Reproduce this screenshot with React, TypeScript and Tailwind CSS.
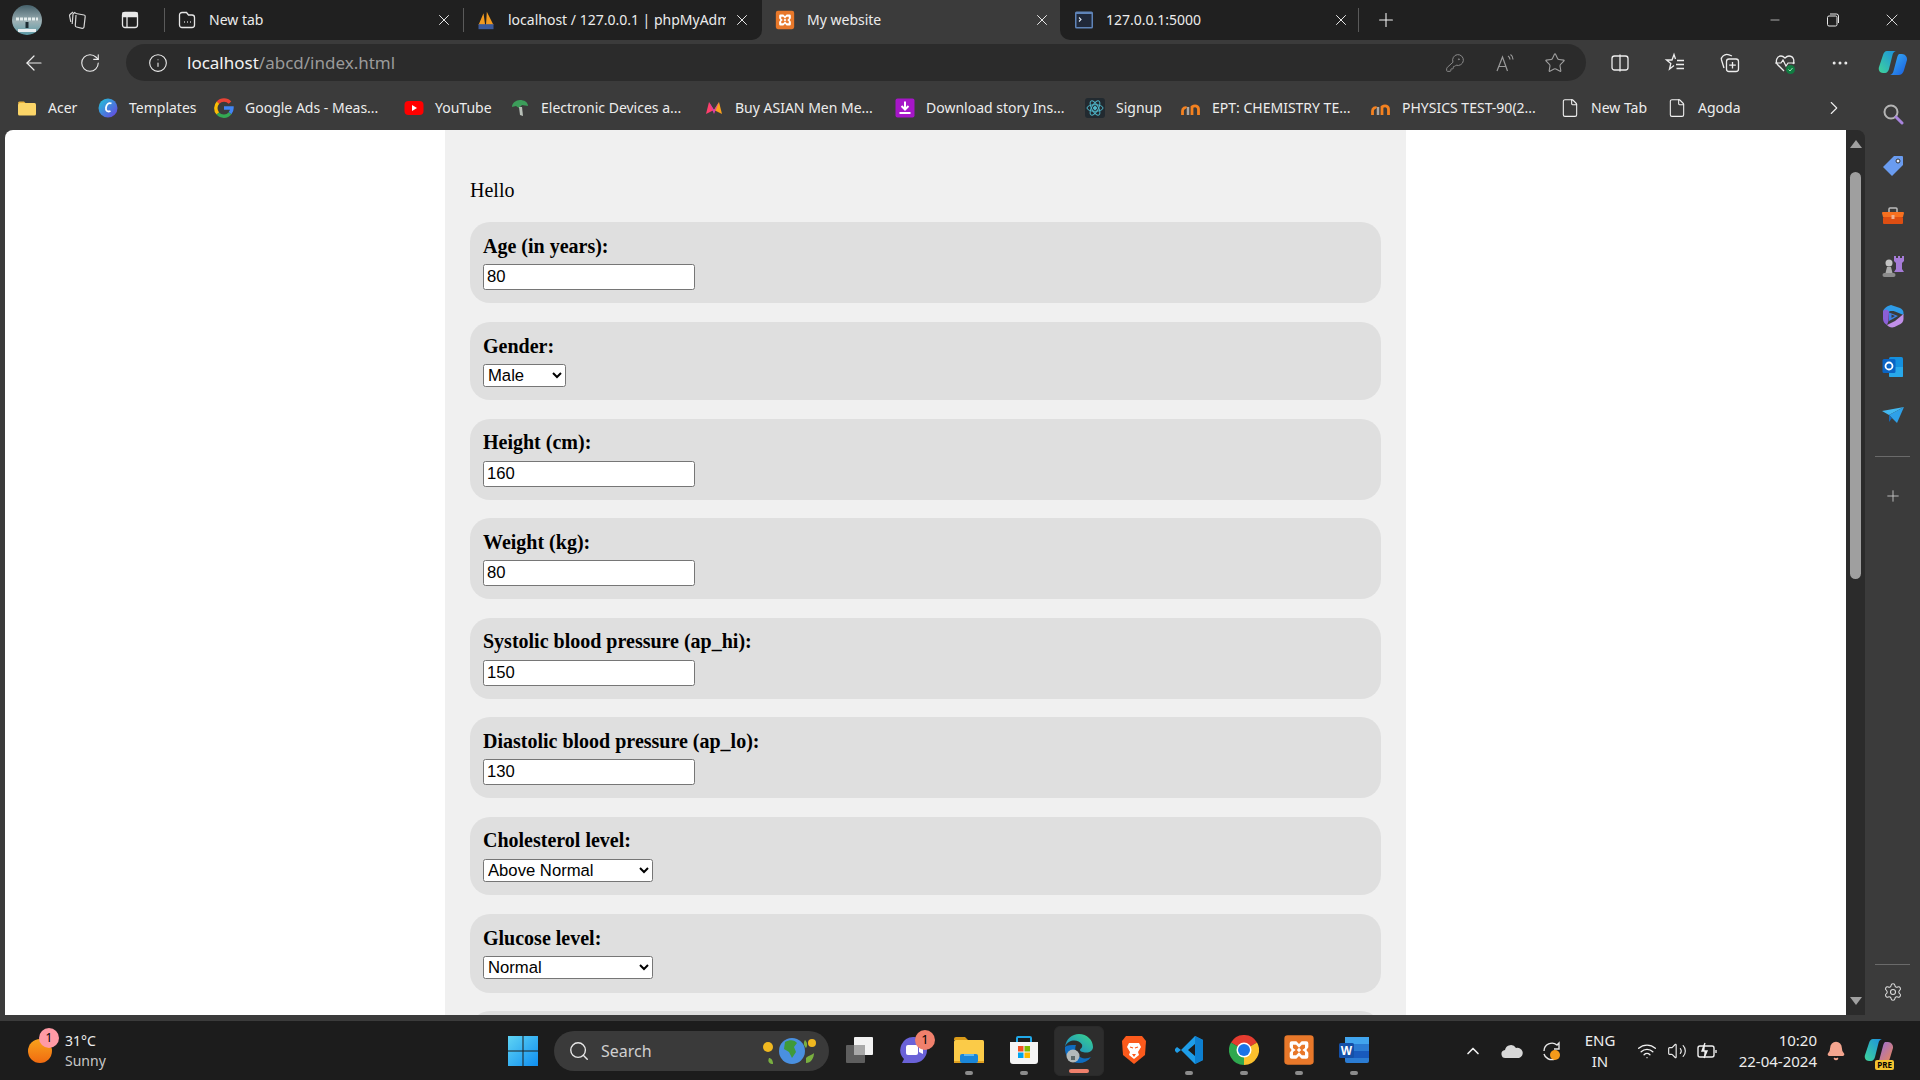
import type { ReactNode } from "react";
import {
  ArrowLeft,
  Bell,
  ChevronRight,
  ChevronUp,
  File,
  Info,
  KeyRound,
  Minus,
  MoreHorizontal,
  Plus,
  RotateCw,
  Search,
  Settings,
  Star,
  Volume2,
  Wifi,
  X,
} from "lucide-react";

function Xampp({ size = 20 }: { size?: number }) {
  return (
    <svg width={size} height={size} viewBox="0 0 24 24">
      <rect x="1" y="1" width="22" height="22" rx="2.500" fill="#e8782a" />
      <path
        d="M6.500 5.500H10l2 2 2-2h3.500A1.500 1.500 0 0 1 19 7v3l-1.500 2 1.500 2v3a1.500 1.500 0 0 1-1.500 1.500H14l-2-2-2 2H6.500A1.500 1.500 0 0 1 5 17v-3l1.500-2L5 10V7a1.500 1.500 0 0 1 1.500-1.500z"
        fill="#fff"
      />
      <path d="M7.500 8h2.300l2.200 2.300L14.200 8h2.300v2.500L14.500 12l2 1.500V16h-2.300L12 13.700 9.800 16H7.500v-2.500l2-1.500-2-1.500z" fill="#e8782a" />
      <path d="M10.300 12 12 10.300 13.700 12 12 13.700z" fill="#fff" />
    </svg>
  );
}

function Pma() {
  return (
    <svg width="22" height="22" viewBox="0 0 24 24">
      <path d="M3 18 9 4l2 14zM12 18l1-16 8 16z" fill="#f29a1f" />
      <rect x="3" y="17" width="18" height="6" fill="#3c5a9a" />
    </svg>
  );
}

function TabPageIcon() {
  return (
    <svg width="20" height="20" viewBox="0 0 20 20" fill="none" stroke="#e6e6e6" strokeWidth="1.300">
      <path d="M5 2.500h4.500L11.500 5H15a2.500 2.500 0 0 1 2.500 2.500V15a2.500 2.500 0 0 1-2.500 2.500H5A2.500 2.500 0 0 1 2.500 15V5A2.500 2.500 0 0 1 5 2.500z" />
      <path d="M7 12h.8M10 12h.8M13 12h.8" strokeWidth="1.600" />
    </svg>
  );
}

function TerminalIcon() {
  return (
    <svg width="20" height="20" viewBox="0 0 20 20">
      <rect x="1" y="1.500" width="18" height="17" rx="1.500" fill="#5f84b8" />
      <rect x="2.500" y="4" width="15" height="13" fill="#20293a" />
      <path d="M5 7.500 7 9.500 5 11.500" stroke="#dfe7f2" fill="none" strokeWidth="1.100" />
    </svg>
  );
}

function Avatar() {
  return (
    <svg width="30" height="30" viewBox="0 0 30 30">
      <defs>
        <linearGradient id="av" x1="0" y1="0" x2="0" y2="1">
          <stop offset="0" stopColor="#45606a" />
          <stop offset="0.55" stopColor="#9db1b5" />
          <stop offset="1" stopColor="#5c9aa6" />
        </linearGradient>
      </defs>
      <circle cx="15" cy="15" r="15" fill="url(#av)" />
      <path d="M4 14h22" stroke="#e5eeee" strokeWidth="3" strokeDasharray="3 1" />
      <path d="M13.500 17h3v6h-3z" fill="#1d2c33" />
      <path d="M6 24h18v3H6z" fill="#e8eef0" />
    </svg>
  );
}

function Workspaces() {
  return (
    <svg width="22" height="22" viewBox="0 0 22 22" fill="none" stroke="#d6d6d6" strokeWidth="1.200">
      <path d="M10 4.500 18 6a1.500 1.500 0 0 1 1.200 1.700L18 18a1.500 1.500 0 0 1-1.800 1.300L10.500 18a1.500 1.500 0 0 1-1.200-1.700L10 6" />
      <path d="M10 4.500 8.600 3.500 7 5 6.200 15" />
      <path d="M7 3 4 5.500a1.500 1.500 0 0 0-.4 1.500l1.200 6" />
    </svg>
  );
}

function VerticalTabs() {
  return (
    <svg width="20" height="20" viewBox="0 0 20 20" fill="none" stroke="#e8e8e8" strokeWidth="1.300">
      <rect x="2.500" y="2.500" width="15" height="15" rx="2.500" />
      <path d="M3 3h14v3.500H3z" fill="#e8e8e8" />
      <path d="M7 6v11" />
    </svg>
  );
}

function Restore() {
  return (
    <svg width="14" height="14" viewBox="0 0 14 14" fill="none" stroke="#e8e8e8" strokeWidth="1">
      <rect x="1.500" y="3" width="9.500" height="10" rx="1.500" />
      <path d="M4 1h6.500A2 2 0 0 1 12.500 3v7" />
    </svg>
  );
}

function ReadAloud() {
  return (
    <svg width="22" height="22" viewBox="0 0 22 22" fill="none" stroke="#9a9a9a" strokeWidth="1.200">
      <path d="M3 19 8.500 5l5 14M5 14.500h7" />
      <path d="M14 4c1.500.8 2 2 2 3.500M16.500 2.500c1.800 1.200 2.500 3 2.500 5" />
    </svg>
  );
}

function SplitIcon() {
  return (
    <svg width="20" height="20" viewBox="0 0 20 20" fill="none" stroke="#ededed" strokeWidth="1.300">
      <rect x="2" y="3" width="16" height="14" rx="2.500" />
      <path d="M10 1.500v17" />
    </svg>
  );
}

function Favs() {
  return (
    <svg width="22" height="22" viewBox="0 0 22 22" fill="none" stroke="#ededed" strokeWidth="1.300">
      <path d="M10 13.500 5.500 17l1.300-5.500L2.500 8h5.500L10 2.500 11.500 7" />
      <path d="M13 8.500h7M12 12.500h8M12.500 16.500h7.500" />
    </svg>
  );
}

function Collections() {
  return (
    <svg width="22" height="22" viewBox="0 0 22 22" fill="none" stroke="#ededed" strokeWidth="1.300">
      <path d="M5 16 2.500 8c-.4-1.500 .2-3 1.500-4l2-1.200c1-.5 2.500-.5 4 0L13 4" />
      <rect x="7.500" y="7" width="12" height="12.500" rx="2.500" />
      <path d="M13.500 10v6.500M10.200 13.200h6.600" />
    </svg>
  );
}

function Health() {
  return (
    <svg width="24" height="24" viewBox="0 0 24 24" fill="none">
      <path d="M11 20 4.500 13.500C2 10 4 5 8 5c2 0 3 1 4 2 1-1 2-2 4-2 4 0 6 4 4 8" stroke="#ededed" strokeWidth="1.300" />
      <path d="M2 12h6l2-3 3 6 2-3h7" stroke="#ededed" strokeWidth="1.200" />
      <circle cx="17.500" cy="18.500" r="4.500" fill="#107c41" />
      <path d="M15.500 18.500l1.500 1.500 2.500-3" stroke="#9fe0b8" strokeWidth="1" />
    </svg>
  );
}

function CopilotLogo({ tray }: { tray?: boolean }) {
  return (
    <svg width="30" height="26" viewBox="0 0 30 26">
      <defs>
        <linearGradient id="cpa" x1="0" y1="1" x2="1" y2="0">
          <stop offset="0" stopColor="#3fd49a" />
          <stop offset="1" stopColor="#1b8fe0" />
        </linearGradient>
        <linearGradient id="cpb" x1="0" y1="0" x2="1" y2="1">
          <stop offset="0" stopColor="#38b4f4" />
          <stop offset="1" stopColor="#1a5ce0" />
        </linearGradient>
        <linearGradient id="cpc" x1="0" y1="0" x2="1" y2="1">
          <stop offset="0" stopColor="#8f6be8" />
          <stop offset="1" stopColor="#f0884c" />
        </linearGradient>
      </defs>
      <path d="M9 1h9c-2 .5-3 2-3.500 4L11 19c-.5 2-2 4-4 4H5c-3 0-5-3-4-6L5 5c.6-2 2-4 4-4z" fill="url(#cpa)" />
      <path d="M21 4h3c3 0 5.500 3 5 6l-3 10c-.6 2-2 5-5 5h-9c2-.5 3-2 3.500-4L19 8c.3-1.500 1-3 2-4z" fill={tray ? "url(#cpc)" : "url(#cpb)"} />
    </svg>
  );
}

function Favicon({ kind }: { kind: string }) {
  if (kind === "folder")
    return (
      <svg width="20" height="20" viewBox="0 0 20 20">
        <path d="M1 5a1.500 1.500 0 0 1 1.500-1.500H7L9 5.500H1z" fill="#e8b13b" />
        <rect x="1" y="5" width="18" height="12.500" rx="1.500" fill="#fbd568" />
      </svg>
    );
  if (kind === "c")
    return (
      <svg width="20" height="20" viewBox="0 0 20 20">
        <defs>
          <linearGradient id="cg" x1="0" y1="0" x2="1" y2="1">
            <stop offset="0" stopColor="#1fc7d8" />
            <stop offset="1" stopColor="#6a3fe0" />
          </linearGradient>
        </defs>
        <circle cx="10" cy="10" r="9.500" fill="url(#cg)" />
        <path d="M13.500 5.500c-3-1.500-5 1-5.500 4-.4 3 1 5 4.500 3.500" fill="none" stroke="#fff" strokeWidth="1.800" />
      </svg>
    );
  if (kind === "google")
    return (
      <svg width="20" height="20" viewBox="0 0 20 20" fill="none" strokeWidth="3.400">
        <path d="M16 4.700A8 8 0 0 0 4 4.700" stroke="#ea4335" />
        <path d="M4 4.700a8 8 0 0 0-.2 10.800" stroke="#fbbc05" />
        <path d="M3.800 15.500a8 8 0 0 0 12.300-.3" stroke="#34a853" />
        <path d="M16.100 15.200A8 8 0 0 0 18 10h-8" stroke="#4285f4" />
      </svg>
    );
  if (kind === "yt")
    return (
      <svg width="20" height="20" viewBox="0 0 20 20">
        <rect x="0.500" y="3" width="19" height="14" rx="4" fill="#f00" />
        <path d="M8 7v6l5-3z" fill="#fff" />
      </svg>
    );
  if (kind === "leaf")
    return (
      <svg width="20" height="20" viewBox="0 0 20 20">
        <path d="M2 9c0-4 4-7 8-7s8 2 8 6l-6-1-3 3-3-2z" fill="#3c9d5a" />
        <path d="M9 9h3l1 9-3-1z" fill="#b8c0b8" />
      </svg>
    );
  if (kind === "myntra")
    return (
      <svg width="20" height="20" viewBox="0 0 20 20">
        <path d="M2 16 5 4l5 8z" fill="#ff3f6c" />
        <path d="M18 16 15 4l-5 8z" fill="#f9a01b" />
        <path d="M5 4 10 12l5-8-5 12z" fill="#d93fa8" />
      </svg>
    );
  if (kind === "dl")
    return (
      <svg width="20" height="20" viewBox="0 0 20 20">
        <rect x="0.500" y="0.500" width="19" height="19" rx="2" fill="#a616c8" />
        <path d="M10 3.500v8M6.500 8l3.500 3.500L13.500 8M4.500 15h11" stroke="#fff" strokeWidth="2" fill="none" />
      </svg>
    );
  if (kind === "react")
    return (
      <svg width="20" height="20" viewBox="0 0 20 20" fill="none" stroke="#4fb6c9" strokeWidth="1">
        <rect width="20" height="20" rx="3" fill="#222a30" stroke="none" />
        <ellipse cx="10" cy="10" rx="8" ry="3.300" />
        <ellipse cx="10" cy="10" rx="8" ry="3.300" transform="rotate(60 10 10)" />
        <ellipse cx="10" cy="10" rx="8" ry="3.300" transform="rotate(120 10 10)" />
        <circle cx="10" cy="10" r="1.500" fill="#4fb6c9" />
      </svg>
    );
  if (kind === "ept")
    return (
      <svg width="20" height="20" viewBox="0 0 20 20" fill="none">
        <path d="M7 17V9" stroke="#a8a8a8" strokeWidth="2.500" />
        <path d="M1.500 17v-4c0-3 3-4 4-3M11 17V9c3-2 6.500-1 6.500 2.500V17" stroke="#f58220" strokeWidth="2.800" />
      </svg>
    );
  return <File size={20} strokeWidth={1.3} color="#f0f0f0" />;
}

const bookmarks = [
  { label: "Acer", icon: "folder", cls: "w-[81px]" },
  { label: "Templates", icon: "c", cls: "w-[116px]" },
  { label: "Google Ads - Meas...", icon: "google", cls: "w-[190px]" },
  { label: "YouTube", icon: "yt", cls: "w-[106px]" },
  { label: "Electronic Devices a...", icon: "leaf", cls: "w-[194px]" },
  { label: "Buy ASIAN Men Me...", icon: "myntra", cls: "w-[191px]" },
  { label: "Download story Ins...", icon: "dl", cls: "w-[190px]" },
  { label: "Signup", icon: "react", cls: "w-[96px]" },
  { label: "EPT: CHEMISTRY TE...", icon: "ept", cls: "w-[190px]" },
  { label: "PHYSICS TEST-90(2...", icon: "ept", cls: "w-[189px]" },
  { label: "New Tab", icon: "file", cls: "w-[107px]" },
  { label: "Agoda", icon: "file", cls: "w-[100px]" },
];

function TabItem({ icon, title, cls }: { icon: ReactNode; title: string; cls: string }) {
  return (
    <div className={`${cls} flex h-10 shrink-0 items-center`}>
      <span className="flex w-[20px] shrink-0 justify-center">{icon}</span>
      <span className="mt-[-2px] ml-[12px] w-[218px] overflow-hidden whitespace-nowrap text-[14px] text-[#ececec]">{title}</span>
      <X size={18} strokeWidth={1.3} color="#ededed" className="ml-auto" />
    </div>
  );
}

function TabStrip() {
  return (
    <div className="flex h-10 shrink-0 bg-[#3b3b3b]">
      <div className="flex w-[762px] rounded-br-[10px] bg-[#202020]">
        <div className="flex w-[165px] shrink-0 items-center">
          <span className="ml-[12px]"><Avatar /></span>
          <span className="ml-[24px]"><Workspaces /></span>
          <span className="ml-[32px]"><VerticalTabs /></span>
          <span className="ml-[24px] h-[24px] w-px bg-[#5a5a5a]" />
        </div>
        <TabItem icon={<TabPageIcon />} title="New tab" cls="w-[298px] pl-[12px] pr-[10px]" />
        <div className="my-[8px] w-px bg-[#5a5a5a]" />
        <TabItem icon={<Pma />} title="localhost / 127.0.0.1 | phpMyAdmin" cls="w-[297px] pl-[12px] pr-[10px]" />
      </div>
      <TabItem icon={<Xampp />} title="My website" cls="w-[298px] pl-[13px] pr-[9px]" />
      <div className="flex flex-1 items-center rounded-bl-[10px] bg-[#202020]">
        <TabItem icon={<TerminalIcon />} title="127.0.0.1:5000" cls="ml-[2px] w-[296px] pl-[12px] pr-[8px]" />
        <div className="h-[24px] w-px bg-[#5a5a5a]" />
        <Plus size={22} strokeWidth={1.2} color="#efefef" className="ml-[16px]" />
        <div className="ml-auto flex items-center">
          <Minus size={14} strokeWidth={1.2} color="#e8e8e8" className="mr-[44px]" />
          <Restore />
          <X size={20} strokeWidth={1.1} color="#e8e8e8" className="ml-[42px] mr-[18px]" />
        </div>
      </div>
    </div>
  );
}

function Toolbar() {
  return (
    <div className="flex h-[45px] shrink-0 items-center bg-[#3b3b3b]">
      <ArrowLeft size={24} strokeWidth={1.2} color="#ededed" className="ml-[22px]" />
      <RotateCw size={22} strokeWidth={1.2} color="#ededed" className="ml-[33px]" />
      <div className="ml-[25px] flex h-[37px] w-[1460px] items-center rounded-full bg-[#2b2b2b]">
        <Info size={20} strokeWidth={1.3} color="#ededed" className="ml-[22px]" />
        <span className="ml-[19px] text-[17px] text-[#f2f2f2]">
          localhost<span className="text-[#9a9a9a]">/abcd/index.html</span>
        </span>
        <KeyRound size={20} strokeWidth={1.2} color="#8a8a8a" className="ml-auto" />
        <span className="ml-[29px]"><ReadAloud /></span>
        <Star size={22} strokeWidth={1.2} color="#a0a0a0" className="ml-[28px] mr-[20px]" />
      </div>
      <span className="ml-[24px]"><SplitIcon /></span>
      <span className="ml-[34px]"><Favs /></span>
      <span className="ml-[33px]"><Collections /></span>
      <span className="ml-[32px]"><Health /></span>
      <MoreHorizontal size={20} strokeWidth={1.6} color="#ededed" className="ml-[33px]" />
      <span className="ml-[28px] flex"><CopilotLogo /></span>
    </div>
  );
}

function BookmarkBar() {
  return (
    <div className="flex h-[45px] shrink-0 items-center bg-[#3b3b3b] pl-[17px]">
      {bookmarks.map((b) => (
        <div key={b.label} className={`${b.cls} flex shrink-0 items-center`}>
          <Favicon kind={b.icon} />
          <span className="ml-[11px] whitespace-nowrap text-[14px] text-[#ededed]">{b.label}</span>
        </div>
      ))}
      <ChevronRight size={22} strokeWidth={1.2} color="#ededed" className="ml-[56px]" />
    </div>
  );
}

function Card({ label, children, cls }: { label: string; children: ReactNode; cls: string }) {
  return (
    <div className={`${cls} mb-[18.75px] rounded-[20px] bg-[#dfdfdf] px-[13px] py-[12.5px]`}>
      <label className="mb-[6.25px] block text-[20px] leading-[23px] font-bold">{label}</label>
      {children}
    </div>
  );
}

function NumberField({ value }: { value: string }) {
  return (
    <input
      type="text"
      defaultValue={value}
      className="block h-[26px] w-[212px] rounded-[2.500px] border border-[#767676] bg-white px-[3px] font-['Liberation_Sans',Arial,sans-serif] text-[16.67px] text-black"
    />
  );
}

function SelectField({ value, cls }: { value: string; cls: string }) {
  return (
    <select
      defaultValue={value}
      className={`${cls} block h-[23px] rounded-[2.500px] border border-[#767676] bg-white font-['Liberation_Sans',Arial,sans-serif] text-[16.67px] text-black`}
    >
      <option>{value}</option>
    </select>
  );
}

function PageContent() {
  return (
    <div className="min-w-0 flex-1 overflow-hidden rounded-tl-[8px] bg-white">
      <div className="ml-[440px] h-full w-[961px] overflow-hidden bg-[#f0f0f0] px-[25px] pt-[49px] font-['Liberation_Serif','Times_New_Roman',serif] text-black">
        <p className="mb-[20px] text-[20px] leading-[23px]">Hello</p>
        <Card label="Age (in years):" cls="h-[81.25px]"><NumberField value="80" /></Card>
        <Card label="Gender:" cls="h-[78px]"><SelectField value="Male" cls="w-[83px]" /></Card>
        <Card label="Height (cm):" cls="h-[80.75px]"><NumberField value="160" /></Card>
        <Card label="Weight (kg):" cls="h-[80.75px]"><NumberField value="80" /></Card>
        <Card label="Systolic blood pressure (ap_hi):" cls="h-[80.75px]"><NumberField value="150" /></Card>
        <Card label="Diastolic blood pressure (ap_lo):" cls="h-[80.75px]"><NumberField value="130" /></Card>
        <Card label="Cholesterol level:" cls="h-[78.5px]"><SelectField value="Above Normal" cls="w-[170px]" /></Card>
        <Card label="Glucose level:" cls="h-[78.5px]"><SelectField value="Normal" cls="w-[170px]" /></Card>
        <Card label="Smoking:" cls="h-[78.5px]"><SelectField value="No" cls="w-[170px]" /></Card>
      </div>
    </div>
  );
}

function Scrollbar() {
  return (
    <div className="flex w-[19px] shrink-0 flex-col items-center rounded-tr-[8px] bg-[#2b2b2b] pt-[10px]">
      <div className="h-0 w-0 border-x-[6px] border-b-[8px] border-x-transparent border-b-[#a0a0a0]" />
      <div className="mt-[24px] h-[407px] w-[11px] rounded-full bg-[#9f9f9f]" />
      <div className="mt-auto mb-[10px] h-0 w-0 border-x-[6px] border-t-[8px] border-x-transparent border-t-[#a0a0a0]" />
    </div>
  );
}

function SideIcon({ children, cls }: { children: ReactNode; cls: string }) {
  return <div className={`${cls} flex justify-center`}>{children}</div>;
}

function Sidebar() {
  return (
    <div className="flex w-[55px] shrink-0 flex-col bg-[#3b3b3b] pb-[13px]">
      <SideIcon cls="mt-[-27px]">
        <svg width="22" height="22" viewBox="0 0 22 22" fill="none">
          <circle cx="9" cy="9" r="6.500" stroke="#b4b4b4" strokeWidth="2" />
          <path d="M14 14l6 6" stroke="#a884dc" strokeWidth="3" strokeLinecap="round" />
        </svg>
      </SideIcon>
      <SideIcon cls="mt-[30px]">
        <svg width="22" height="22" viewBox="0 0 22 22">
          <path d="M12 1h8a1 1 0 0 1 1 1v8L10 21 1 12z" fill="#6a9cf0" />
          <circle cx="16" cy="6" r="2" fill="#e8eefc" stroke="#333" />
        </svg>
      </SideIcon>
      <SideIcon cls="mt-[29px]">
        <svg width="22" height="20" viewBox="0 0 22 20">
          <path d="M7 6V3a1 1 0 0 1 1-1h6a1 1 0 0 1 1 1v3" fill="none" stroke="#bdbdbd" strokeWidth="1.500" />
          <path d="M0 7a1 1 0 0 1 1-1h20a1 1 0 0 1 1 1l-1 4H1z" fill="#f7701f" />
          <rect x="1" y="11" width="20" height="7" rx="1" fill="#dd4e12" />
          <rect x="9.500" y="9" width="3" height="4" fill="#f0b090" />
        </svg>
      </SideIcon>
      <SideIcon cls="mt-[28px]">
        <svg width="22" height="24" viewBox="0 0 22 24">
          <path d="M12 2h2v2h2V2h2v2h2V2h2v5l-2 2v6l2 3H12l2-3V9l-2-2z" fill="#a67cd8" />
          <circle cx="7" cy="9" r="3.500" fill="#c4c4c4" />
          <path d="M5 13h4l1.500 6h-7z" fill="#adadad" />
          <rect x="0.500" y="19" width="13" height="4" rx="2" fill="#8c8c8c" />
        </svg>
      </SideIcon>
      <SideIcon cls="mt-[26px]">
        <svg width="22" height="24" viewBox="0 0 22 24">
          <path d="M9 1 18 4c2.500 1 3.500 3 3.500 5v2L13 7.500C10 6.500 7 7 5 9L1 11V8c0-3 4-6 8-7z" fill="#2e9ce8" />
          <path d="M1 8c0-2 3-3.500 4.500-2L7 7.500 6.500 17 5 21c-2-1-4-3-4-6z" fill="#8b5fd8" />
          <path d="M5 21l8-4 8.500-7V15c0 3-2 5-5 6l-4 2c-3 1-6 0-7.500-2z" fill="#c08fe8" />
          <path d="M7 8.500 16 12l-9 5z" fill="#3f7fe0" />
          <path d="M9.500 10.500 13 12l-3.500 2z" fill="#3b3b3b" />
        </svg>
      </SideIcon>
      <SideIcon cls="mt-[28px]">
        <svg width="22" height="22" viewBox="0 0 22 22">
          <rect x="7" y="1" width="14" height="20" rx="1.500" fill="#1490df" />
          <path d="M7 11h14v9a1 1 0 0 1-1 1H8a1 1 0 0 1-1-1z" fill="#28a8ea" />
          <rect x="0.500" y="3" width="13" height="14" rx="1.500" fill="#0a64c4" />
          <circle cx="7" cy="10" r="3.500" fill="none" stroke="#fff" strokeWidth="1.800" />
        </svg>
      </SideIcon>
      <SideIcon cls="mt-[28px]">
        <svg width="22" height="18" viewBox="0 0 22 18">
          <path d="M0 5 22 1 7 9z" fill="#43b8f0" />
          <path d="M22 1 15 17 7 9z" fill="#2ea0e8" />
          <path d="M7 9v7l3-4z" fill="#1468b8" />
        </svg>
      </SideIcon>
      <div className="mx-auto mt-[32px] h-px w-[35px] bg-[#6a6a6a]" />
      <SideIcon cls="mt-[30px]"><Plus size={18} strokeWidth={1.2} color="#c8c8c8" /></SideIcon>
      <div className="mx-auto mt-auto h-px w-[35px] bg-[#6a6a6a]" />
      <SideIcon cls="mt-[17px]"><Settings size={20} strokeWidth={1.3} color="#dcdcdc" /></SideIcon>
    </div>
  );
}

function TaskApp({ children, dot, badge }: { children: ReactNode; dot?: boolean; badge?: boolean }) {
  return (
    <div className="relative flex h-[50px] w-[55px] shrink-0 flex-col items-center justify-end pb-[1px]">
      <div className="flex h-[30px] items-center">{children}</div>
      <div className="flex h-[10px] items-start">{dot && <span className="mt-[6px] h-[4px] w-[8px] rounded-full bg-[#8c8c8c]" />}</div>
      {badge && (
        <span className="absolute top-[4px] left-[29px] flex h-[20px] w-[20px] items-center justify-center rounded-full bg-[#f0806c] text-[13px] text-black">1</span>
      )}
    </div>
  );
}

function EdgeApp({ children }: { children: ReactNode }) {
  return (
    <div className="mx-[2.500px] flex h-[50px] w-[50px] shrink-0 flex-col items-center justify-end rounded-md border border-[#2a2a2a] bg-[#2d2d2d] pb-[1px]">
      <div className="flex h-[30px] items-center">{children}</div>
      <div className="flex h-[10px] items-start"><span className="mt-[5px] h-[4px] w-[20px] rounded-full bg-[#f0806c]" /></div>
    </div>
  );
}

function Taskbar() {
  return (
    <div className="flex h-[59px] shrink-0 items-center bg-[#1c1c1c] font-['Noto_Sans',sans-serif]">
      <div className="relative ml-[28px] flex w-[480px] shrink-0 items-center">
        <span className="h-[24px] w-[24px] rounded-full bg-gradient-to-b from-[#f7a21c] to-[#f06a10]" />
        <span className="absolute top-[-3px] left-[11px] flex h-[20px] w-[20px] items-center justify-center rounded-full bg-[#ff9aa5] text-[12px] text-black">1</span>
        <div className="ml-[13px] text-[14px] leading-[20px] text-[#ededed]">
          <div>31°C</div>
          <div className="text-[#c8c8c8]">Sunny</div>
        </div>
      </div>
      <svg width="30" height="30" viewBox="0 0 30 30" className="shrink-0">
        <defs>
          <linearGradient id="win" x1="0" y1="0" x2="1" y2="1">
            <stop offset="0" stopColor="#5fd4f4" />
            <stop offset="1" stopColor="#0f8ef0" />
          </linearGradient>
        </defs>
        <path d="M0 0h14.500v14.500H0zM15.500 0H30v14.500H15.500zM0 15.500h14.500V30H0zM15.500 15.500H30V30H15.500z" fill="url(#win)" />
      </svg>
      <div className="ml-[16px] flex h-[40px] w-[275px] shrink-0 items-center rounded-full bg-[#3a3a3a]">
        <Search size={22} strokeWidth={1.5} color="#e8e8e8" className="ml-[14px]" />
        <span className="ml-[11px] text-[16px] text-[#d0d0d0]">Search</span>
        <svg width="60" height="34" viewBox="0 0 60 34" className="ml-auto mr-[8px]">
          <circle cx="7" cy="13" r="5" fill="#f0b820" />
          <path d="M8 24c2 0 4 2 4 6-3 0-6-2-4-6z" fill="#7ab040" />
          <circle cx="31" cy="17" r="13" fill="#4a90e0" />
          <path d="M24 8c5-3 10-2 12 1l-3 4 2 5-4 6-3-6-5-3z" fill="#3f9a3a" />
          <path d="M45 24c3-3 6-3 8-5 0 5-3 10-8 10z" fill="#7ab040" />
          <path d="M44 6c2 2 3 5 1 8-2-2-3-5-1-8z" fill="#7ab040" />
          <circle cx="51" cy="9" r="4" fill="#f0b820" />
        </svg>
      </div>
      <div className="ml-[2px] flex shrink-0 items-center">
        <TaskApp>
          <svg width="30" height="28" viewBox="0 0 30 28">
            <rect x="2" y="9" width="19" height="18" rx="1" fill="#5e5e5e" />
            <rect x="10" y="1" width="19" height="18" rx="1" fill="#f2f2f2" />
            <rect x="10" y="9" width="11" height="10" fill="#a8a8a8" />
          </svg>
        </TaskApp>
        <TaskApp badge>
          <svg width="30" height="30" viewBox="0 0 30 30">
            <path d="M15 2a13 13 0 0 1 0 26H3l2-4a13 13 0 0 1 10-22z" fill="#6a62d8" />
            <rect x="7" y="10" width="12" height="10" rx="2" fill="#fff" />
            <path d="M20 13l4-2v8l-4-2z" fill="#fff" />
          </svg>
        </TaskApp>
        <TaskApp dot>
          <svg width="30" height="28" viewBox="0 0 30 28">
            <path d="M0 3a2 2 0 0 1 2-2h9l3 3H0z" fill="#d99a18" />
            <rect y="4" width="30" height="23" rx="1.500" fill="#fbcb48" />
            <rect y="25" width="30" height="2" fill="#e0a020" />
            <rect x="6" y="18" width="18" height="9" rx="2" fill="#1a86d8" />
            <rect x="10" y="18" width="10" height="2" fill="#5cb8f0" />
          </svg>
        </TaskApp>
        <TaskApp dot>
          <svg width="30" height="30" viewBox="0 0 30 30">
            <path d="M8 7V3a1 1 0 0 1 1-1h12a1 1 0 0 1 1 1v4" fill="none" stroke="#20a8e8" strokeWidth="2" />
            <path d="M1 7h28v19a3 3 0 0 1-3 3H4a3 3 0 0 1-3-3z" fill="#f4f4f4" />
            <rect x="9" y="11" width="5.500" height="5.500" fill="#f25022" />
            <rect x="15.500" y="11" width="5.500" height="5.500" fill="#7fba00" />
            <rect x="9" y="17.500" width="5.500" height="5.500" fill="#00a4ef" />
            <rect x="15.500" y="17.500" width="5.500" height="5.500" fill="#ffb900" />
          </svg>
        </TaskApp>
        <EdgeApp>
          <svg width="32" height="32" viewBox="0 0 32 32">
            <defs>
              <linearGradient id="edg" x1="0" y1="1" x2="1" y2="0">
                <stop offset="0" stopColor="#1a7fd0" />
                <stop offset="1" stopColor="#3ad88a" />
              </linearGradient>
            </defs>
            <path d="M2 14C3 6 9 1 16 1c8 0 14 6 14 13 0 3.500-3 5.500-7 5.500-3 0-6-1-6-2.500 0-.7.5-1 1-1.500 1-1 1.500-2 1-4C17 8 13 7 10 7.500 6 8 3 11 2 14z" fill="url(#edg)" />
            <path d="M2 14c-1 9 6 16 14 16 5 0 9-2 12-6-3 1.500-7 2-10 .5C13 22 11 17 13 12 8 12 4 12 2 14z" fill="#0f6cc0" />
            <circle cx="10" cy="23" r="6.500" fill="#b4baba" />
            <path d="M8 23h4v4H8z" fill="#5f6a6a" />
          </svg>
        </EdgeApp>
        <TaskApp>
          <svg width="26" height="30" viewBox="0 0 26 30">
            <path d="M5 1h16l4 5-1 14-11 9L2 20 1 6z" fill="#fb5a1c" />
            <path d="M8 8h10l2 4-3 5 1 3-5 4-5-4 1-3-3-5z" fill="#fff" />
            <path d="M11 19h4l-2 3z" fill="#fb5a1c" />
            <path d="M9 12l3 1M17 12l-3 1" stroke="#fb5a1c" strokeWidth="1.200" />
          </svg>
        </TaskApp>
        <TaskApp dot>
          <svg width="30" height="30" viewBox="0 0 30 30">
            <path d="M21 1 7 15 3 12l-2 2v2l2 2 4-3 14 14 8-4V5zM21 9v12l-7-6z" fill="#1e9de8" />
            <path d="M21 1l8 4v20l-8 4z" fill="#0d7fd0" />
          </svg>
        </TaskApp>
        <TaskApp dot>
          <svg width="30" height="30" viewBox="0 0 30 30">
            <path d="M15 15 28 7.500A15 15 0 0 0 2 7.500z" fill="#e53c30" />
            <path d="M15 15 28 7.500A15 15 0 0 1 15 30z" fill="#fbc02d" />
            <path d="M15 15V30A15 15 0 0 1 2 7.500z" fill="#2fa84f" />
            <circle cx="15" cy="15" r="7.500" fill="#fff" />
            <circle cx="15" cy="15" r="6" fill="#1a73e8" />
          </svg>
        </TaskApp>
        <TaskApp dot>
          <Xampp size={32} />
        </TaskApp>
        <TaskApp dot>
          <svg width="30" height="30" viewBox="0 0 30 30">
            <rect x="6" y="2" width="24" height="26" rx="2" fill="#2b7cd3" />
            <rect x="6" y="2" width="24" height="7" fill="#41a5ee" />
            <rect x="6" y="16" width="24" height="7" fill="#185abd" />
            <rect x="0" y="8" width="15" height="15" rx="1.500" fill="#1450a8" />
            <text x="7.500" y="19.500" textAnchor="middle" fontSize="12" fontWeight="700" fill="#fff" fontFamily="Liberation Sans">W</text>
          </svg>
        </TaskApp>
      </div>
      <div className="ml-[82px] flex shrink-0 items-center">
        <ChevronUp size={20} strokeWidth={2} color="#efefef" />
        <svg width="22" height="16" viewBox="0 0 22 16" className="ml-[18px]">
          <path d="M5 15a4 4 0 0 1-1-8 6 6 0 0 1 11-2 5 5 0 0 1 3 10z" fill="#d8d8d8" />
        </svg>
        <svg width="22" height="24" viewBox="0 0 22 24" fill="none" stroke="#e8e8e8" strokeWidth="1.400" className="ml-[18px]">
          <path d="M3 12a8 8 0 0 1 13-6l2-2v6h-5" />
          <path d="M3 15c1 4 6 7 11 5" />
          <circle cx="14" cy="16" r="5" fill="#f59a1a" stroke="none" />
        </svg>
        <div className="ml-[13px] w-[48px] text-center text-[15px] leading-[21px] text-[#ededed]">
          <div>ENG</div>
          <div>IN</div>
        </div>
        <Wifi size={20} strokeWidth={1.600} color="#f0f0f0" className="ml-[13px]" />
        <Volume2 size={20} strokeWidth={1.400} color="#e8e8e8" className="ml-[10px]" />
        <svg width="22" height="20" viewBox="0 0 22 20" className="ml-[9px]" fill="none" stroke="#f0f0f0" strokeWidth="1.400">
          <rect x="2" y="5" width="16" height="11" rx="2" />
          <path d="M20 9v3" />
          <path d="M9 2 6 10h5l-3 7" fill="#f0f0f0" />
        </svg>
        <div className="ml-[11px] w-[88px] text-right text-[15px] leading-[21px] text-[#ededed]">
          <div>10:20</div>
          <div>22-04-2024</div>
        </div>
        <Bell size={20} fill="#f4a58f" color="#f4a58f" className="ml-[9px]" />
        <span className="relative ml-[18px] flex">
          <CopilotLogo tray />
          <span className="absolute right-[0px] bottom-[-6px] rounded-[2px] bg-[#f2c230] px-[2px] text-[8px] leading-[10px] font-bold text-black">PRE</span>
        </span>
      </div>
    </div>
  );
}

export default function App() {
  return (
    <div className="flex h-screen w-full flex-col overflow-hidden bg-[#3b3b3b] font-['Noto_Sans',sans-serif]">
      <TabStrip />
      <Toolbar />
      <BookmarkBar />
      <div className="flex h-[885px] shrink-0 pl-[5px]">
        <PageContent />
        <Scrollbar />
        <Sidebar />
      </div>
      <div className="h-[6px] shrink-0 bg-[#3b3b3b]" />
      <Taskbar />
    </div>
  );
}
